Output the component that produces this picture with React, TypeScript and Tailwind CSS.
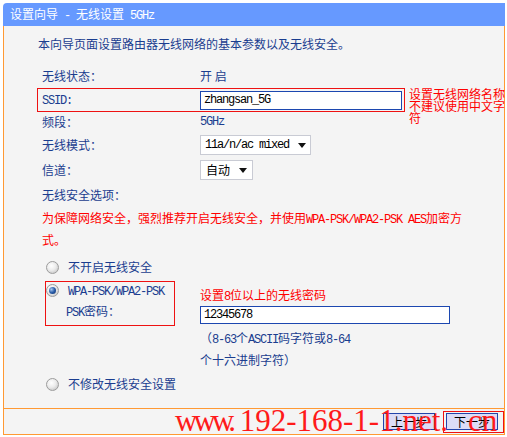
const mono = "font-['Liberation_Mono','Noto_Sans_CJK_SC',monospace] tracking-[-1.2px]"

function L({ children }: { children: React.ReactNode }) {
  return <span className={mono}>{children}</span>
}

function Radio({ checked }: { checked?: boolean }) {
  return (
    <div className="w-[13px] h-[13px] rounded-full border border-[#9c9c9c] bg-[radial-gradient(circle_at_40%_35%,#ffffff_0%,#ececec_45%,#b8b8b8_100%)] flex items-center justify-center shrink-0">
      {checked && (
        <div className="w-[7px] h-[7px] rounded-full bg-[radial-gradient(circle_at_35%_35%,#a9c8ef_0%,#2a5da8_50%,#0b2c66_100%)]" />
      )}
    </div>
  )
}

function Arrow() {
  return <div className="w-0 h-0 border-l-[4px] border-r-[4px] border-t-[5px] border-l-transparent border-r-transparent border-t-[#111]" />
}

export default function App() {
  return (
    <div className="relative w-[507px] h-[437px] bg-white pt-[3px] pl-[3px] font-['Noto_Sans_CJK_SC',sans-serif] text-[12px] text-[#1a3d8f]">
      <div className="w-[502px]">
        {/* title bar */}
        <div className="h-[23px] bg-[#6699ff] rounded-tl-[4px] flex items-center pl-[7px] text-white text-[12px]">
          <span className="whitespace-pre">
            设置向导<L> - </L>无线设置<L> 5GHz</L>
          </span>
        </div>

        {/* body */}
        <div className="h-[382px] bg-[#f4f4f4] border-x border-[#ff9933] pt-[8px]">
          <div className="h-[20px] flex items-center pl-[34px]">本向导页面设置路由器无线网络的基本参数以及无线安全。</div>

          <div className="mt-[11px] h-[22px] flex items-center pl-[38px]">
            <div className="w-[158px]">无线状态：</div>
            <div className="whitespace-pre">开 启</div>
          </div>

          <div className="mt-[1px] h-[24px] flex items-start pl-[33px]">
            <div className="w-[368px] h-[24px] shrink-0 border border-[#ee1111] flex items-center pl-[4px]">
              <div className="w-[158px]"><L>SSID:</L></div>
              <div className="w-[202px] h-[19px] border border-[#1c47b0] bg-white flex items-center pl-[3px] text-black">
                <L>zhangsan_5G</L>
              </div>
            </div>
            <div className="ml-[4px] w-[96px] shrink-0 leading-[12px] text-[#ff0000] break-all">设置无线网络名称不建议使用中文字符</div>
          </div>

          <div className="h-[20px] flex items-center pl-[38px]">
            <div className="w-[158px]">频段：</div>
            <L>5GHz</L>
          </div>

          <div className="h-[26px] flex items-center pl-[38px]">
            <div className="w-[158px]">无线模式：</div>
            <div className="w-[111px] h-[20px] border border-[#c9cbd4] bg-white flex items-center justify-between pl-[4px] pr-[4px] text-black">
              <L>11a/n/ac mixed</L>
              <Arrow />
            </div>
          </div>

          <div className="h-[24px] flex items-center pl-[38px]">
            <div className="w-[158px]">信道：</div>
            <div className="w-[53px] h-[20px] border border-[#c9cbd4] bg-white flex items-center justify-between pl-[5px] pr-[5px] text-black">
              <span>自动</span>
              <Arrow />
            </div>
          </div>

          <div className="h-[26px] flex items-center pl-[38px]">无线安全选项：</div>

          <div className="pl-[38px] leading-[20px] text-[#ff0000]">
            为保障网络安全，强烈推荐开启无线安全，并使用<L>WPA-PSK/WPA2-PSK AES</L>加密方
            <br />
            式。
          </div>

          <div className="mt-[6px] h-[22px] flex items-center pl-[42px]">
            <Radio />
            <span className="ml-[9px]">不开启无线安全</span>
          </div>

          <div className="mt-[3px] flex items-start pl-[41px]">
            <div className="w-[130px] h-[45px] shrink-0 border border-[#ee1111]">
              <div className="h-[17px] flex items-center">
                <Radio checked />
                <span className="ml-[9px]"><L>WPA-PSK/WPA2-PSK</L></span>
              </div>
              <div className="h-[25px] flex items-center pl-[20px]">
                <span><L>PSK</L>密码：</span>
              </div>
            </div>
            <div className="ml-[25px] mt-[7px]">
              <div className="leading-[14px] text-[#ff0000]">设置<L>8</L>位以上的无线密码</div>
              <div className="mt-[2px] w-[250px] h-[18px] border border-[#1c47b0] bg-white flex items-center pl-[3px] text-black">
                <L>12345678</L>
              </div>
              <div className="mt-[4px] leading-[19px]">
                （<L>8-63</L>个<L>ASCII</L>码字符或<L>8-64</L>
                <br />
                个十六进制字符）
              </div>
            </div>
          </div>

          <div className="mt-[4px] h-[22px] flex items-center pl-[42px]">
            <Radio />
            <span className="ml-[9px]">不修改无线安全设置</span>
          </div>
        </div>

        {/* footer */}
        <div className="h-[27px] bg-[#f4f4f4] border border-[#ff9933] flex items-center justify-end">
          <button className="w-[52px] h-[17px] border border-[#2244aa] bg-[#dcdcf6] text-black text-[12px] leading-none flex items-center justify-center">
            上一步
          </button>
          <div className="ml-[8px] w-[61px] h-[22px] border border-[#ee1111] flex items-center pl-[2px]">
            <button className="w-[52px] h-[17px] border border-[#2244aa] bg-[#dcdcf6] text-black text-[12px] leading-none flex items-center justify-center">
              下一步
            </button>
          </div>
        </div>
      </div>

      {/* watermark */}
      <div className="absolute left-[175px] top-[405px] font-['Liberation_Serif',serif] text-[31px] leading-none text-[#ff1a1a] whitespace-nowrap pointer-events-none">
        <span className="tracking-[-4px]">www.</span> 192-168-1-1.net.<span className="ml-[20px]">cn</span>
      </div>
    </div>
  )
}
